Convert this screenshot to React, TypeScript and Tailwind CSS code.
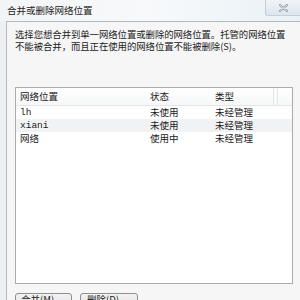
import React from "react";

const cjk = { fontFamily: '"Noto Sans CJK SC", "Noto Sans", sans-serif' };
const mono = { fontFamily: '"Liberation Mono", "Noto Sans CJK SC", monospace' };

export default function App() {
  const rows = [
    { name: "lh", latin: true, state: "未使用", type: "未经管理", hi: false },
    { name: "xiani", latin: true, state: "未使用", type: "未经管理", hi: true },
    { name: "网络", latin: false, state: "使用中", type: "未经管理", hi: false },
  ];
  return (
    <div
      className="w-[300px] h-[300px] overflow-hidden relative bg-[#edf0f3] text-[#1a1a1a]"
      style={cjk}
    >
      {/* title bar */}
      <div className="h-[21px] flex items-center pl-[7px] bg-gradient-to-r from-[#f2f4f6] via-[#f7f9fb] to-[#e9f2f7] text-[9.5px] leading-none text-[#222]">
        合并或删除网络位置
      </div>
      <div className="absolute right-0 top-0 w-[35px] h-[16px] border border-t-0 border-r-0 border-[#c3ced8] rounded-bl-[3px] bg-gradient-to-b from-[#f0f4f7] to-[#dde6ed] flex items-center justify-center">
        <svg width="9" height="8" viewBox="0 0 9 8">
          <path d="M1 1 L8 7 M8 1 L1 7" stroke="#8f98a1" strokeWidth="2.2" strokeLinecap="round" />
          <path d="M1 1 L8 7 M8 1 L1 7" stroke="#f4f6f8" strokeWidth="0.8" strokeLinecap="round" />
        </svg>
      </div>

      {/* content */}
      <div className="ml-[6px] h-[279px] border-l border-t border-[#b4b8bc] bg-[#f6f6f6] pl-[8px] pt-[6px]">
        <div className="text-[9.4px] leading-[12px] text-[#1a1a1a] tracking-[-0.05px]">
          <div>选择您想合并到单一网络位置或删除的网络位置。托管的网络位置</div>
          <div>不能被合并，而且正在使用的网络位置不能被删除(S)。</div>
        </div>

        {/* list */}
        <div className="mt-[35px] w-[278px] h-[197px] border border-[#a8acb0] bg-white">
          <div className="flex h-[18px] items-center border-b border-[#e3e6e9] bg-gradient-to-b from-white to-[#f6f7f8] text-[9.5px] leading-none">
            <div className="w-[130px] pl-[4px]">网络位置</div>
            <div className="w-[65px] pl-[4px]">状态</div>
            <div className="w-[62px] pl-[4px]">类型</div>
            <div className="h-full border-l border-[#e4e6e8] w-[4px]" />
            <div className="h-full border-l border-[#e4e6e8] flex-1" />
          </div>
          {rows.map((r) => (
            <div
              key={r.name}
              className={`flex h-[13px] items-center text-[9.5px] leading-none ${r.hi ? "bg-[#f1f2f3]" : ""}`}
            >
              <div className="w-[130px] pl-[4px]" style={r.latin ? mono : undefined}>
                {r.name}
              </div>
              <div className="w-[65px] pl-[4px]">{r.state}</div>
              <div className="w-[62px] pl-[4px]">{r.type}</div>
            </div>
          ))}
        </div>

        {/* buttons */}
        <div className="mt-[9px] flex gap-[8px]">
          <div className="w-[57px] h-[22px] border border-[#8e8f8f] rounded-[3px] bg-gradient-to-b from-[#f2f2f2] to-[#dcdcdc] text-[9.5px] pl-[5px] pt-[1px] leading-none">
            合并(M)
          </div>
          <div className="w-[58px] h-[22px] border border-[#8e8f8f] rounded-[3px] bg-gradient-to-b from-[#f2f2f2] to-[#dcdcdc] text-[9.5px] pl-[6px] pt-[1px] leading-none">
            删除(D)
          </div>
        </div>
      </div>
    </div>
  );
}
